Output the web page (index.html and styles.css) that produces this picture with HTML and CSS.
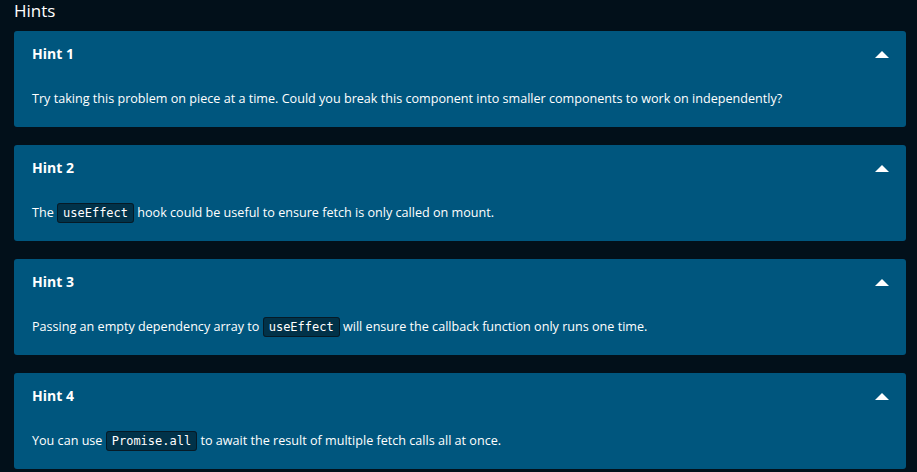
FILE: index.html
```html
<!DOCTYPE html>
<html>
<head>
<meta charset="utf-8">
<link rel="stylesheet" href="styles.css">
</head>
<body>
<h2 class="title">Hints</h2>
<div class="hints">
  <section class="hint">
    <div class="hint-head"><span class="hint-name">Hint 1</span><span class="caret"></span></div>
    <p class="hint-body">Try taking this problem on piece at a time. Could you break this component into smaller components to work on independently?</p>
  </section>
  <section class="hint">
    <div class="hint-head"><span class="hint-name">Hint 2</span><span class="caret"></span></div>
    <p class="hint-body">The <code>useEffect</code> hook could be useful to ensure fetch is only called on mount.</p>
  </section>
  <section class="hint">
    <div class="hint-head"><span class="hint-name">Hint 3</span><span class="caret"></span></div>
    <p class="hint-body">Passing an empty dependency array to <code>useEffect</code> will ensure the callback function only runs one time.</p>
  </section>
  <section class="hint">
    <div class="hint-head"><span class="hint-name">Hint 4</span><span class="caret"></span></div>
    <p class="hint-body">You can use <code>Promise.all</code> to await the result of multiple fetch calls all at once.</p>
  </section>
</div>
</body>
</html>
```
FILE: styles.css
```css
html, body {
  margin: 0;
  padding: 0;
  background: #02101a;
  color: #ffffff;
  font-family: "Open Sans", "Noto Sans", sans-serif;
}
body {
  padding: 0 11px 0 14px;
}
.title {
  margin: 0;
  font-size: 17px;
  font-weight: 400;
  line-height: 22px;
  height: 31px;
  box-sizing: border-box;
}
.hints {
  display: flex;
  flex-direction: column;
  gap: 18px;
}
.hint {
  background: #00567e;
  border-radius: 3px;
  height: 96px;
  box-sizing: border-box;
  padding: 0 17px 0 18px;
}
.hint-head {
  display: flex;
  align-items: center;
  justify-content: space-between;
  height: 45px;
}
.hint-name {
  font-weight: 700;
  font-size: 14px;
}
.caret {
  width: 0;
  height: 0;
  border-left: 7px solid transparent;
  border-right: 7px solid transparent;
  border-bottom: 7px solid #ffffff;
  margin-top: 1px;
}
.hint-body {
  margin: 0;
  margin-top: 13px;
  font-size: 12.6px;
  line-height: 20px;
}
code {
  font-family: "DejaVu Sans Mono", monospace;
  font-size: 12px;
  background: #013249;
  border: 1px solid #061a26;
  border-radius: 3px;
  padding: 2px 5px;
}
```
